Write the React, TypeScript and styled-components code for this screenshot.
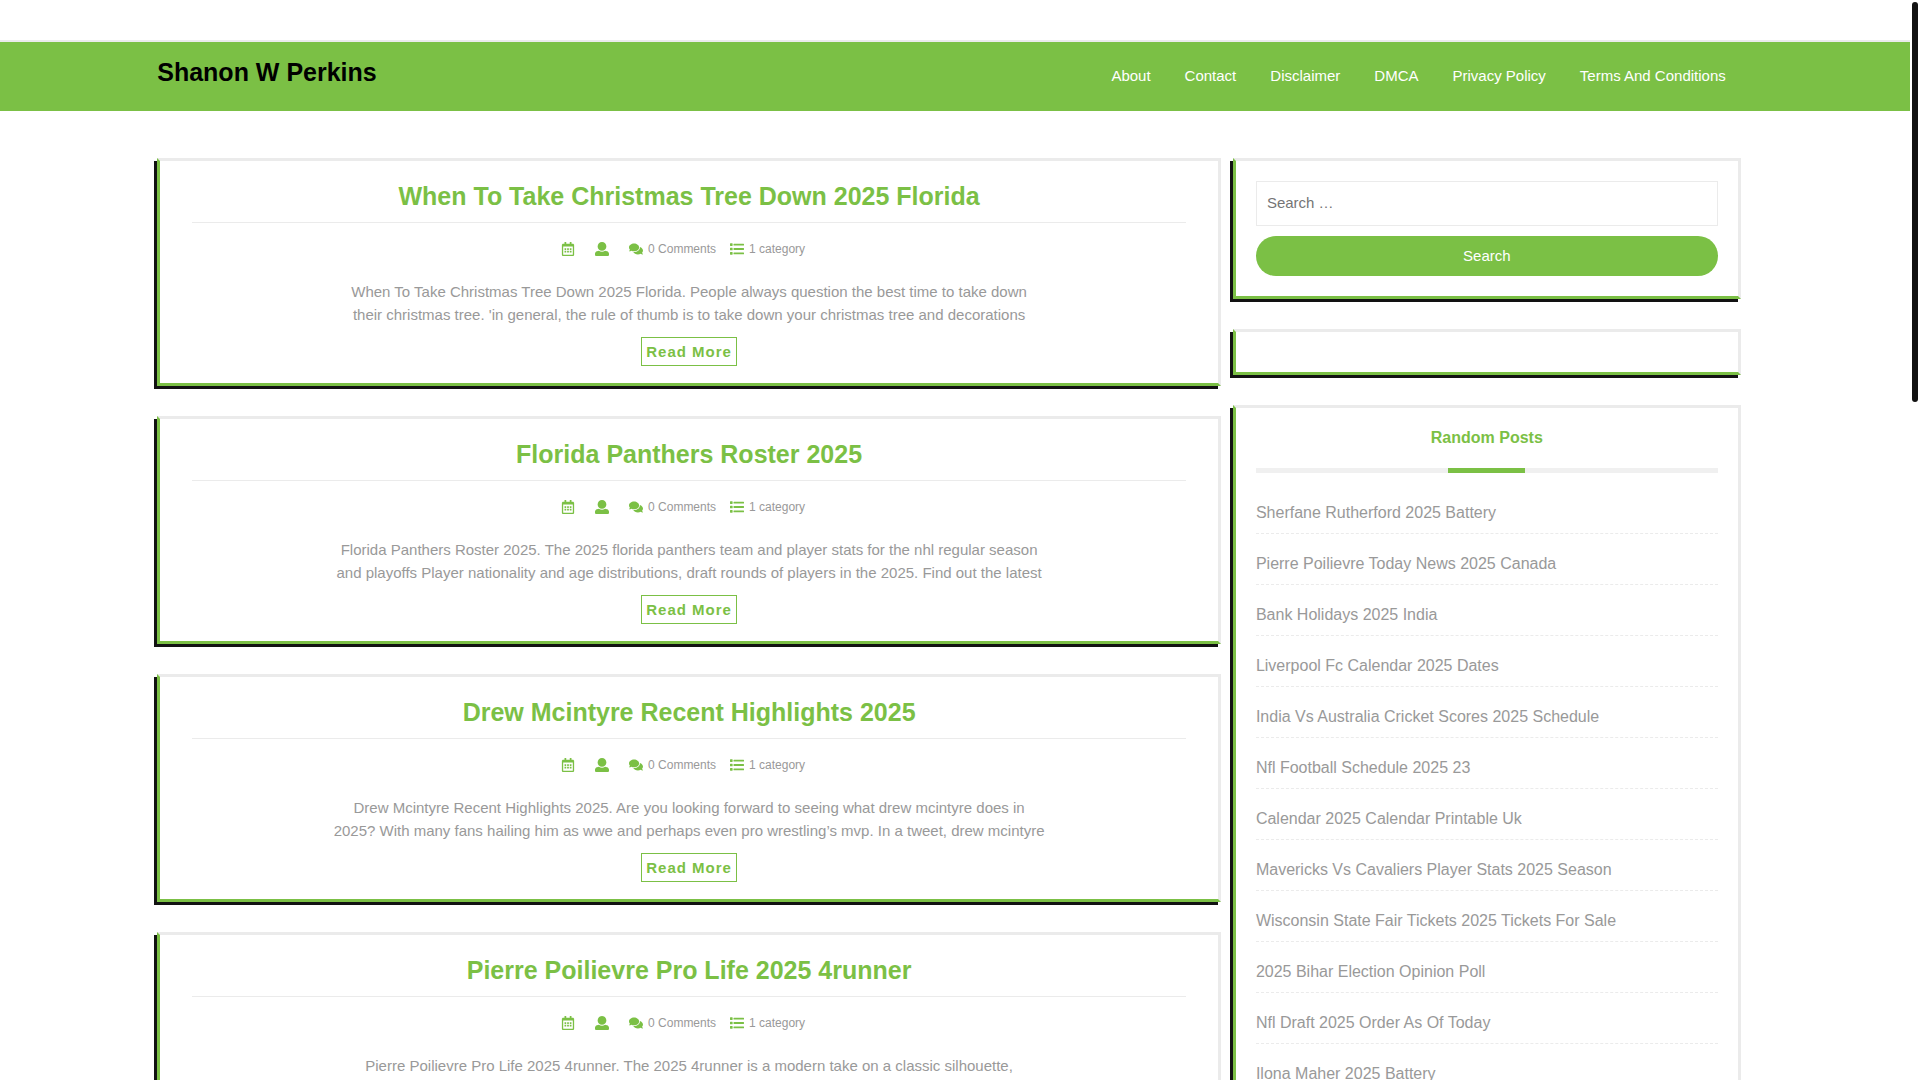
import React from "react";
import styled, { createGlobalStyle } from "styled-components";
import { FaRegCalendarAlt, FaComments } from "react-icons/fa";

const green = "#7bc045";
const light = "#ebebeb";
const grey = "#999999";

const GlobalStyle = createGlobalStyle`
  *, *::before, *::after { box-sizing: border-box; }
  html, body { height: 100%; overflow: hidden; }
  body {
    margin: 0;
    background: #fff;
    color: ${grey};
    font-family: "Liberation Sans", Arial, sans-serif;
    font-size: 15px;
    line-height: 23px;
  }
  #root { height: 100%; }
  a { color: inherit; text-decoration: none; }
  h1, h2, h3, p, ul { margin: 0; padding: 0; }
`;

const Shell = styled.div`
  display: flex;
  height: 100vh;
  overflow: hidden;
`;

const Page = styled.div`
  flex: 1;
  min-width: 0;
`;

const ScrollTrack = styled.div`
  flex: 0 0 10px;
  padding: 2px;
`;

const ScrollThumb = styled.div`
  height: 400px;
  border-radius: 5px;
  background: #121212;
`;

const Container = styled.div`
  width: 85%;
  margin: 0 auto;
  padding: 0 14px;
`;

const Header = styled.header`
  margin-top: 40px;
  border-top: 2px solid ${light};
  background: ${green};
`;

const HeaderRow = styled(Container)`
  display: flex;
  justify-content: space-between;
  align-items: flex-start;
  height: 69px;
`;

const SiteTitle = styled.h1`
  padding-top: 15px;
  color: #000;
  font-size: 25px;
  line-height: 30px;
`;

const Nav = styled.nav`
  display: flex;
  gap: 34px;
  padding: 22px 27px 0 0;
  color: #fff;
`;

const Columns = styled(Container)`
  display: grid;
  grid-template-columns: minmax(0, 1064fr) minmax(0, 508fr);
  align-items: start;
  gap: 12px;
  padding-right: 26px;
  padding-top: 47px;
`;

const Stack = styled.div`
  display: flex;
  flex-direction: column;
  gap: 30px;
`;

const Panel = styled.section`
  border: 3px solid;
  border-color: ${light} ${light} ${green} ${green};
  box-shadow: -3px 3px #121212;
`;

const Post = styled(Panel).attrs({ as: "article" })`
  display: flex;
  flex-direction: column;
  align-items: center;
  padding: 15px 32px 17px;
  text-align: center;
`;

const PostTitle = styled.h2`
  width: 100%;
  padding: 5px 0 11px;
  border-bottom: 1px solid ${light};
  color: ${green};
  font-size: 25px;
  line-height: 30px;
`;

const Meta = styled.div`
  display: flex;
  align-items: center;
  margin-top: 14px;
  padding-right: 12px;
  font-size: 12px;
  line-height: 24px;
`;

const MetaItem = styled.span<{ $gap?: number }>`
  display: flex;
  align-items: center;
  gap: 5px;
  margin-right: ${({ $gap = 14 }) => $gap}px;
  &:last-child { margin-right: 0; }
  svg {
    width: auto;
    height: 14px;
    fill: ${green};
  }
`;

const Excerpt = styled.p`
  margin-top: 19px;
`;

const ReadMore = styled.a`
  margin-top: 11px;
  padding: 2px 4px;
  border: 1px solid ${green};
  color: ${green};
  font-weight: bold;
  letter-spacing: 1px;
`;

const Widget = styled(Panel)`
  padding: 20px;
`;

const SearchForm = styled.form`
  display: flex;
  flex-direction: column;
  gap: 10px;
`;

const SearchInput = styled.input`
  width: 100%;
  height: 45px;
  padding: 0 10px 2px;
  border: 1px solid ${light};
  background: #fff;
  font: inherit;
  &::placeholder { color: #757575; opacity: 1; }
`;

const SearchButton = styled.button`
  height: 40px;
  padding: 0 10px 2px;
  border: 0;
  border-radius: 20px;
  background: ${green};
  color: #fff;
  font: inherit;
`;

const WidgetTitle = styled.h3`
  display: flex;
  flex-direction: column;
  align-items: center;
  gap: 20px;
  margin-bottom: 28px;
  color: ${green};
  font-size: 16px;
  line-height: 20px;
`;

const TitleBar = styled.span`
  width: 100%;
  height: 5px;
  background: #f0f0f0;
  &::after {
    content: "";
    display: block;
    width: 77px;
    height: 5px;
    margin: 0 auto;
    background: ${green};
  }
`;

const Links = styled.ul`
  list-style: none;
  font-size: 16px;
  line-height: 24px;
`;

const LinkRow = styled.li`
  margin-bottom: 18px;
  padding-bottom: 8px;
  border-bottom: 1px dashed ${light};
`;

const UserIcon = () => (
  <svg viewBox="0 0 512 512" aria-hidden="true">
    <path d="M256 0c88.366 0 160 71.634 160 160s-71.634 160-160 160S96 248.366 96 160 167.634 0 256 0zm183.283 333.821l-71.313-17.828c-74.923 53.89-165.738 41.864-223.94 0l-71.313 17.828C29.981 344.505 0 382.903 0 426.955V464c0 26.51 21.49 48 48 48h416c26.51 0 48-21.49 48-48v-37.045c0-44.052-29.981-82.45-72.717-93.134z" />
  </svg>
);

const ListIcon = () => (
  <svg viewBox="0 0 512 512" aria-hidden="true">
    <path d="M128 116V76c0-8.837 7.163-16 16-16h352c8.837 0 16 7.163 16 16v40c0 8.837-7.163 16-16 16H144c-8.837 0-16-7.163-16-16zm16 176h352c8.837 0 16-7.163 16-16v-40c0-8.837-7.163-16-16-16H144c-8.837 0-16 7.163-16 16v40c0 8.837 7.163 16 16 16zm0 160h352c8.837 0 16-7.163 16-16v-40c0-8.837-7.163-16-16-16H144c-8.837 0-16 7.163-16 16v40c0 8.837 7.163 16 16 16zM16 144h64c8.837 0 16-7.163 16-16V64c0-8.837-7.163-16-16-16H16C7.163 48 0 55.163 0 64v64c0 8.837 7.163 16 16 16zm0 160h64c8.837 0 16-7.163 16-16v-64c0-8.837-7.163-16-16-16H16c-8.837 0-16 7.163-16 16v64c0 8.837 7.163 16 16 16zm0 160h64c8.837 0 16-7.163 16-16v-64c0-8.837-7.163-16-16-16H16c-8.837 0-16 7.163-16 16v64c0 8.837 7.163 16 16 16z" />
  </svg>
);

const navItems = ["About", "Contact", "Disclaimer", "DMCA", "Privacy Policy", "Terms And Conditions"];

const posts = [
  {
    title: "When To Take Christmas Tree Down 2025 Florida",
    lines: [
      "When To Take Christmas Tree Down 2025 Florida. People always question the best time to take down",
      "their christmas tree. 'in general, the rule of thumb is to take down your christmas tree and decorations",
    ],
  },
  {
    title: "Florida Panthers Roster 2025",
    lines: [
      "Florida Panthers Roster 2025. The 2025 florida panthers team and player stats for the nhl regular season",
      "and playoffs Player nationality and age distributions, draft rounds of players in the 2025. Find out the latest",
    ],
  },
  {
    title: "Drew Mcintyre Recent Highlights 2025",
    lines: [
      "Drew Mcintyre Recent Highlights 2025. Are you looking forward to seeing what drew mcintyre does in",
      "2025? With many fans hailing him as wwe and perhaps even pro wrestling’s mvp. In a tweet, drew mcintyre",
    ],
  },
  {
    title: "Pierre Poilievre Pro Life 2025 4runner",
    lines: ["Pierre Poilievre Pro Life 2025 4runner. The 2025 4runner is a modern take on a classic silhouette,"],
  },
];

const randomPosts = [
  "Sherfane Rutherford 2025 Battery",
  "Pierre Poilievre Today News 2025 Canada",
  "Bank Holidays 2025 India",
  "Liverpool Fc Calendar 2025 Dates",
  "India Vs Australia Cricket Scores 2025 Schedule",
  "Nfl Football Schedule 2025 23",
  "Calendar 2025 Calendar Printable Uk",
  "Mavericks Vs Cavaliers Player Stats 2025 Season",
  "Wisconsin State Fair Tickets 2025 Tickets For Sale",
  "2025 Bihar Election Opinion Poll",
  "Nfl Draft 2025 Order As Of Today",
  "Ilona Maher 2025 Battery",
];

export default function App() {
  return (
    <Shell>
      <GlobalStyle />
      <Page>
        <Header>
          <HeaderRow>
            <SiteTitle><a href="#home">Shanon W Perkins</a></SiteTitle>
            <Nav>
              {navItems.map((item) => <a key={item} href="#page">{item}</a>)}
            </Nav>
          </HeaderRow>
        </Header>
        <Columns as="main">
          <Stack>
            {posts.map((post) => (
              <Post key={post.title}>
                <PostTitle><a href="#post">{post.title}</a></PostTitle>
                <Meta>
                  <MetaItem $gap={20}><FaRegCalendarAlt /></MetaItem>
                  <MetaItem $gap={20}><UserIcon /></MetaItem>
                  <MetaItem><FaComments />0 Comments</MetaItem>
                  <MetaItem><ListIcon />1 category</MetaItem>
                </Meta>
                <Excerpt>
                  {post.lines.map((line, i) => (
                    <React.Fragment key={line}>{i > 0 && <br />}{line}</React.Fragment>
                  ))}
                </Excerpt>
                <ReadMore href="#post">Read More</ReadMore>
              </Post>
            ))}
          </Stack>
          <Stack as="aside">
            <Widget>
              <SearchForm role="search" onSubmit={(e) => e.preventDefault()}>
                <SearchInput type="search" aria-label="Search for" placeholder="Search …" />
                <SearchButton type="submit">Search</SearchButton>
              </SearchForm>
            </Widget>
            <Widget />
            <Widget>
              <WidgetTitle>Random Posts<TitleBar /></WidgetTitle>
              <Links>
                {randomPosts.map((title) => (
                  <LinkRow key={title}><a href="#post">{title}</a></LinkRow>
                ))}
              </Links>
            </Widget>
          </Stack>
        </Columns>
      </Page>
      <ScrollTrack><ScrollThumb /></ScrollTrack>
    </Shell>
  );
}
